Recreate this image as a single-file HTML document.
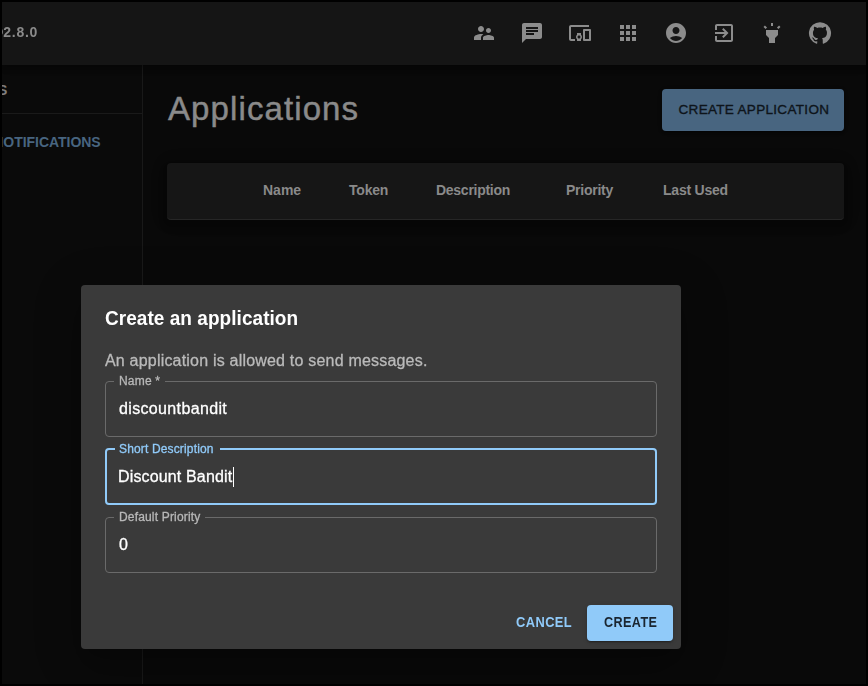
<!DOCTYPE html>
<html>
<head>
<meta charset="utf-8">
<title>Gotify</title>
<style>
*{box-sizing:border-box;margin:0;padding:0}
html,body{width:868px;height:686px;overflow:hidden;background:#000}
body{font-family:"Liberation Sans",sans-serif;position:relative}
.abs{position:absolute}
#frame{left:2px;top:2px;width:864px;height:682px;background:#090909;overflow:hidden}
#appbar{left:0;top:0;width:864px;height:63px;background:#151515;box-shadow:0 2px 4px -1px rgba(0,0,0,.2),0 4px 5px 0 rgba(0,0,0,.14),0 1px 10px 0 rgba(0,0,0,.12)}
.t{position:absolute;white-space:nowrap;line-height:1}
.ic{position:absolute;width:24px;height:24px;fill:#8c8c8c}
#side{left:0;top:63px;width:141px;height:620px;background:#0a0a0a;border-right:1px solid #191919}
#sdiv{left:0;top:111px;width:140px;height:1px;background:#1a1a1a}
#cab{left:660px;top:87px;width:182px;height:42px;background:#486580;border-radius:4px;box-shadow:0 3px 1px -2px rgba(0,0,0,.2),0 2px 2px 0 rgba(0,0,0,.14),0 1px 5px 0 rgba(0,0,0,.12)}
#tbl{left:165px;top:161px;width:677px;height:57px;background:#161616;border-radius:4px;border-bottom:1px solid #262626;box-shadow:0 3px 5px -1px rgba(0,0,0,.2),0 6px 10px 0 rgba(0,0,0,.14),0 1px 18px 0 rgba(0,0,0,.12)}
#dlg{will-change:transform;left:79px;top:283px;width:600px;height:364px;background:#3a3a3a;border-radius:4px;box-shadow:0 11px 15px -7px rgba(0,0,0,.2),0 24px 38px 3px rgba(0,0,0,.14),0 9px 46px 8px rgba(0,0,0,.12)}
.fld{position:absolute;left:24px;width:552px;height:56px;border:1px solid #6a6a6a;border-radius:4px}
.fld.foc{border:2px solid #90caf9}
.lbl{-webkit-text-stroke:.3px;position:absolute;top:-7px;left:8px;padding:0 5px;background:#3a3a3a;font-size:12px;line-height:13px;color:#b8b8b8;white-space:nowrap}
.foc .lbl{color:#90caf9;top:-7px;left:8px;padding-left:4px}
.val{-webkit-text-stroke:.3px;position:absolute;left:13px;top:19px;font-size:16px;line-height:1;color:#fff;white-space:nowrap}
.foc .val{left:11px;top:19px}
.cur{position:absolute;left:126px;top:17px;width:1px;height:20px;background:#fff}
#create{left:506px;top:320px;width:86px;height:36px;background:#90caf9;border-radius:4px;box-shadow:0 3px 1px -2px rgba(0,0,0,.2),0 2px 2px 0 rgba(0,0,0,.14),0 1px 5px 0 rgba(0,0,0,.12)}
</style>
</head>
<body>
<div id="frame" class="abs">

  <div id="side" class="abs"></div>
  <div id="sdiv" class="abs"></div>
  <div class="t" style="left:-4px;top:81px;font-size:14px;font-weight:bold;color:#7d7d7d">S</div>
  <div class="t" style="left:-8.8px;top:133px;font-size:14px;font-weight:bold;color:#486580;letter-spacing:-.03px">NOTIFICATIONS</div>

  <div id="appbar" class="abs"></div>
  <div class="t" style="will-change:transform;left:-11.9px;top:23px;font-size:14px;font-weight:bold;color:#8a8a8a;letter-spacing:.74px"><span style="margin-right:-1.1px">@</span>2.8.0</div>

  <svg class="ic" style="left:470px;top:19px" viewBox="0 0 24 24"><path d="M16.5 12c1.38 0 2.49-1.12 2.49-2.5S17.88 7 16.5 7C15.12 7 14 8.12 14 9.5s1.12 2.5 2.5 2.5zM9 11c1.66 0 2.99-1.34 2.99-3S10.66 5 9 5C7.34 5 6 6.34 6 8s1.34 3 3 3zm7.5 3c-1.83 0-5.5.92-5.5 2.75V19h11v-2.25c0-1.83-3.67-2.75-5.5-2.75zM9 13c-2.33 0-7 1.17-7 3.5V19h7v-2.25c0-.85.33-2.34 2.37-3.47C10.500 13.1 9.660 13 9 13z"/></svg>
  <svg class="ic" style="left:518px;top:19px" viewBox="0 0 24 24"><path d="M20 2H4c-1.1 0-1.99.9-1.99 2L2 22l4-4h14c1.1 0 2-.9 2-2V4c0-1.1-.9-2-2-2zM6 9h12v2H6V9zm8 5H6v-2h8v2zm4-6H6V6h12v2z"/></svg>
  <svg class="ic" style="left:566px;top:19px" viewBox="0 0 24 24"><path d="M3 6h18V4H3c-1.1 0-2 .9-2 2v12c0 1.1.9 2 2 2h4v-2H3V6zm10 6H9v1.78c-.61.55-1 1.33-1 2.220s.39 1.670 1 2.220V20h4v-1.780c.61-.55 1-1.340 1-2.220s-.39-1.670-1-2.220V12zm-2 5.500c-.83 0-1.500-.67-1.500-1.500s.67-1.500 1.500-1.500 1.500.67 1.500 1.500-.67 1.500-1.500 1.500zM22 8h-6c-.5 0-1 .5-1 1v10c0 .5.5 1 1 1h6c.5 0 1-.5 1-1V9c0-.5-.5-1-1-1zm-1 10h-4v-8h4v8z"/></svg>
  <svg class="ic" style="left:614px;top:19px" viewBox="0 0 24 24"><path d="M4 8h4V4H4v4zm6 12h4v-4h-4v4zm-6 0h4v-4H4v4zm0-6h4v-4H4v4zm6 0h4v-4h-4v4zm6-10v4h4V4h-4zm-6 4h4V4h-4v4zm6 6h4v-4h-4v4zm0 6h4v-4h-4v4z"/></svg>
  <svg class="ic" style="left:662px;top:19px" viewBox="0 0 24 24"><path d="M12 2C6.48 2 2 6.48 2 12s4.48 10 10 10 10-4.48 10-10S17.52 2 12 2zm0 4c1.93 0 3.5 1.57 3.5 3.5S13.93 13 12 13s-3.5-1.57-3.5-3.5S10.07 6 12 6zm0 14c-2.03 0-4.43-.82-6.14-2.88C7.55 15.8 9.68 15 12 15s4.45.8 6.14 2.12C16.43 19.18 14.03 20 12 20z"/></svg>
  <svg class="ic" style="left:710px;top:19px" viewBox="0 0 24 24"><path d="M10.09 15.59L11.5 17l5-5-5-5-1.41 1.41L12.67 11H3v2h9.67l-2.58 2.59zM19 3H5c-1.11 0-2 .9-2 2v4h2V5h14v14H5v-4H3v4c0 1.1.89 2 2 2h14c1.1 0 2-.9 2-2V5c0-1.1-.9-2-2-2z"/></svg>
  <svg class="ic" style="left:758px;top:19px" viewBox="0 0 24 24"><path d="M6 14l3 3v5h6v-5l3-3V9H6v5zm5-12h2v3h-2V2zM3.5 5.88l1.41-1.41 2.12 2.12L5.62 8 3.5 5.88zm13.46.71l2.12-2.12 1.41 1.41L18.38 8l-1.42-1.41z"/></svg>
  <svg class="ic" style="left:806px;top:19px" viewBox="0 0 24 24"><path d="M12 1.27a11 11 0 00-3.48 21.46c.55.09.73-.28.73-.55v-1.84c-3.03.64-3.67-1.46-3.67-1.46-.55-1.29-1.28-1.65-1.28-1.65-.92-.65.1-.65.1-.65 1.1 0 1.73 1.1 1.73 1.1.92 1.65 2.57 1.2 3.21.92a2 2 0 01.64-1.47c-2.47-.27-5.04-1.19-5.04-5.5 0-1.1.46-2.1 1.2-2.84a3.76 3.76 0 010-2.93s.91-.28 3.11 1.1c1.8-.49 3.7-.49 5.5 0 2.1-1.38 3.02-1.1 3.02-1.1a3.76 3.76 0 010 2.93c.83.74 1.2 1.74 1.2 2.94 0 4.21-2.57 5.13-5.04 5.4.45.37.82.92.82 2.02v3.03c0 .27.1.64.73.55A11 11 0 0012 1.27"/></svg>

  <div class="t" style="left:166px;top:90px;font-size:33px;color:#8a8a8a;letter-spacing:1.1px;-webkit-text-stroke:.45px #8a8a8a">Applications</div>

  <div id="cab" class="abs"></div>
  <div class="t" style="left:676.5px;top:100.5px;font-size:13.5px;color:#0e141a;letter-spacing:.32px;-webkit-text-stroke:.35px #0e141a">CREATE APPLICATION</div>

  <div id="tbl" class="abs"></div>
  <div class="t" style="left:261px;top:181px;font-size:14px;font-weight:bold;color:#8a8a8a">Name</div>
  <div class="t" style="left:347px;top:181px;font-size:14px;font-weight:bold;color:#8a8a8a;letter-spacing:-.2px">Token</div>
  <div class="t" style="left:434px;top:181px;font-size:14px;font-weight:bold;color:#8a8a8a;letter-spacing:-.27px">Description</div>
  <div class="t" style="left:564px;top:181px;font-size:14px;font-weight:bold;color:#8a8a8a;letter-spacing:-.25px">Priority</div>
  <div class="t" style="left:661px;top:181px;font-size:14px;font-weight:bold;color:#8a8a8a;letter-spacing:-.22px">Last Used</div>

  <div id="dlg" class="abs">
    <div class="t" style="left:24px;top:22.5px;font-size:20px;font-weight:bold;color:#fff;letter-spacing:.05px;transform:scaleX(.95);transform-origin:0 0">Create an application</div>
    <div class="t" style="left:24px;top:68px;font-size:16px;color:#bababa;letter-spacing:.2px;-webkit-text-stroke:.3px #bababa">An application is allowed to send messages.</div>

    <div class="fld" style="top:96px"><span class="lbl" style="letter-spacing:.2px">Name *</span><span class="val" style="letter-spacing:.35px">discountbandit</span></div>
    <div class="fld foc" style="top:163px;height:57px"><span class="lbl" style="letter-spacing:.15px;padding-right:6px">Short Description</span><span class="val" style="letter-spacing:.15px">Discount Bandit</span><i class="cur"></i></div>
    <div class="fld" style="top:232px"><span class="lbl" style="letter-spacing:.17px">Default Priority</span><span class="val">0</span></div>

    <div class="t" style="left:434.6px;top:330.3px;font-size:14px;font-weight:bold;color:#90caf9;letter-spacing:.45px;transform:scaleX(.92);transform-origin:0 0">CANCEL</div>
    <div id="create" class="abs"></div>
    <div class="t" style="left:522.9px;top:330.3px;font-size:14px;font-weight:bold;color:#1a2530;letter-spacing:.45px;transform:scaleX(.9);transform-origin:0 0">CREATE</div>
  </div>

</div>
</body>
</html>
